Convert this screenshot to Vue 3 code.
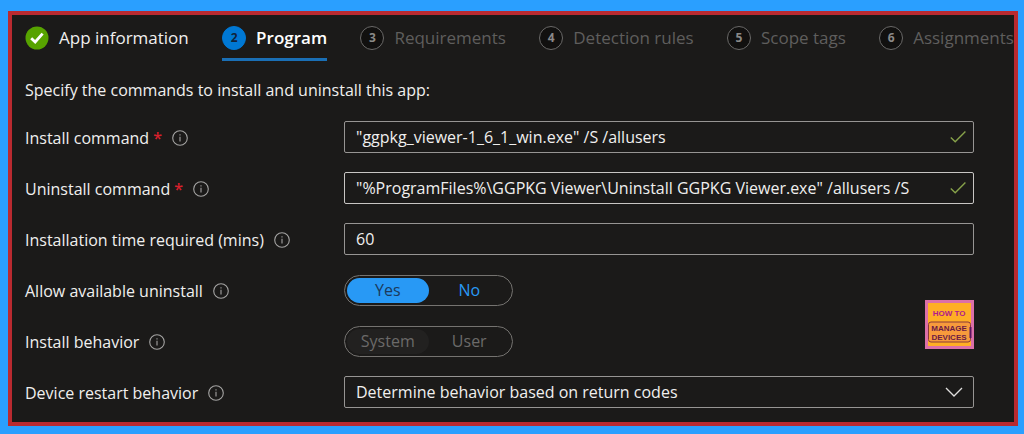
<script setup>
import { ref } from 'vue'

const steps = [
  { n: 1, title: 'App information', state: 'done' },
  { n: 2, title: 'Program', state: 'current' },
  { n: 3, title: 'Requirements', state: 'todo' },
  { n: 4, title: 'Detection rules', state: 'todo' },
  { n: 5, title: 'Scope tags', state: 'todo' },
  { n: 6, title: 'Assignments', state: 'todo' },
]

const fields = ref([
  { id: 'install', label: 'Install command', required: true, kind: 'text', valid: true, value: '"ggpkg_viewer-1_6_1_win.exe" /S /allusers' },
  { id: 'uninstall', label: 'Uninstall command', required: true, kind: 'text', valid: true, focused: true, value: '"%ProgramFiles%\\GGPKG Viewer\\Uninstall GGPKG Viewer.exe" /allusers /S' },
  { id: 'time', label: 'Installation time required (mins)', kind: 'text', value: '60' },
  { id: 'allow', label: 'Allow available uninstall', kind: 'toggle', options: ['Yes', 'No'], value: 'Yes' },
  { id: 'behavior', label: 'Install behavior', kind: 'toggle', disabled: true, options: ['System', 'User'], value: 'System' },
  { id: 'restart', label: 'Device restart behavior', kind: 'select', options: ['Determine behavior based on return codes'], value: 'Determine behavior based on return codes' },
])
</script>

<template>
  <div class="backdrop">
    <main class="panel">
      <nav class="steps" aria-label="Steps">
        <button v-for="s in steps" :key="s.n" type="button" class="step" :class="s.state">
          <svg v-if="s.state === 'done'" class="done-icon" viewBox="0 0 24 24" aria-hidden="true">
            <circle cx="12" cy="12" r="11.5" fill="#57a300" />
            <path d="M6.2 12.2 L10.2 16 L17.6 7.6" fill="none" stroke="#fff" stroke-width="2.8" />
          </svg>
          <span v-else class="badge">{{ s.n }}</span>
          <span class="title">{{ s.title }}</span>
        </button>
      </nav>

      <p class="intro">Specify the commands to install and uninstall this app:</p>

      <form class="form" @submit.prevent>
        <div v-for="f in fields" :key="f.id" class="row">
          <div class="caption">
            <label :id="f.id + '-label'" :for="f.kind === 'toggle' ? f.id + '-' + f.value : f.id">{{ f.label }}</label>
            <span v-if="f.required" class="required">*</span>
            <svg class="info" viewBox="0 0 16 16" aria-hidden="true">
              <circle cx="8" cy="8" r="7.3" />
              <path d="M8 6.8 V11.6 M8 4.2 V5.4" />
            </svg>
          </div>

          <div v-if="f.kind === 'text'" class="control">
            <input :id="f.id" v-model="f.value" type="text" class="box" :class="{ focused: f.focused }" spellcheck="false" />
            <svg v-if="f.valid" class="mark valid" viewBox="0 0 16 16" aria-hidden="true">
              <path d="M0.8 8.6 L5.2 12.8 L15.4 2.6" />
            </svg>
          </div>

          <div v-else-if="f.kind === 'toggle'" class="toggle" :class="{ off: f.disabled }" role="radiogroup" :aria-labelledby="f.id + '-label'">
            <label v-for="o in f.options" :key="o" class="option">
              <input :id="f.id + '-' + o" v-model="f.value" type="radio" :name="f.id" :value="o" :disabled="f.disabled" />
              <span>{{ o }}</span>
            </label>
          </div>

          <div v-else class="control">
            <select :id="f.id" v-model="f.value" class="box">
              <option v-for="o in f.options" :key="o">{{ o }}</option>
            </select>
            <svg class="mark chevron" viewBox="0 0 18 18" aria-hidden="true">
              <path d="M1 5 L9 13 L17 5" />
            </svg>
          </div>
        </div>
      </form>

      <svg class="logo" viewBox="0 0 49 49" role="img" aria-label="How to manage devices">
        <rect width="49" height="49" fill="#dc6fa8" />
        <rect x="3" y="3" width="43" height="43" fill="#ffae25" />
        <rect x="3.5" y="22" width="42" height="20" rx="2.5" fill="#f79a3c" stroke="#8a3a38" stroke-width="1" />
        <rect x="44.5" y="27" width="2" height="11" fill="#5a1560" />
        <text x="24" y="16" class="logo-text logo-top">HOW TO</text>
        <text x="24" y="31" class="logo-text logo-low">MANAGE</text>
        <text x="24" y="40" class="logo-text logo-low">DEVICES</text>
      </svg>
    </main>
  </div>
</template>

<style>
body {
  background: #2a9fff;
}
</style>

<style scoped>
.backdrop {
  box-sizing: border-box;
  padding: 11px 6px 8px 8px;
  background: #2a9fff;
  color: #f0efee;
  font: 16px/24px "Open Sans", "Noto Sans", sans-serif;
}

.panel {
  position: relative;
  box-sizing: border-box;
  padding: 10px 0 14px 13px;
  background: #1b1a19;
  border: 4px solid #b92a30;
}

.steps {
  display: flex;
  justify-content: space-between;
}

.step {
  display: flex;
  align-items: center;
  gap: 10px;
  height: 36px;
  padding: 0 0 8px;
  background: none;
  border: 0;
  border-bottom: 3px solid transparent;
  color: #5f5e5d;
  font: 17px/24px "Open Sans", "Noto Sans", sans-serif;
  white-space: nowrap;
}

.done {
  color: #f0efee;
}

.current {
  border-bottom-color: #1a6fb5;
  color: #fff;
  font-weight: 600;
}

.done-icon {
  width: 24px;
  height: 24px;
}

.badge {
  box-sizing: border-box;
  width: 24px;
  height: 24px;
  border: 1px solid #6a6968;
  border-radius: 50%;
  background: #11100f;
  color: #8a8988;
  font-size: 12px;
  line-height: 22px;
  font-weight: 700;
  text-align: center;
}

.current .badge {
  border-color: #0078d4;
  background: #0078d4;
  color: #11223a;
}

.intro {
  margin: 17px 0 19px;
}

.form {
  display: grid;
  gap: 19px;
  padding-right: 40px;
}

.row {
  display: grid;
  grid-template-columns: 319px 1fr;
  align-items: center;
  height: 32px;
}

.caption {
  display: flex;
  align-items: center;
  padding-top: 2px;
}

.required {
  margin-left: 4px;
  color: #d8202c;
  font-weight: 600;
}

.info {
  width: 16px;
  height: 16px;
  margin-left: 10px;
  fill: none;
  stroke: #a5a4a3;
  stroke-width: 1.1;
}

.control {
  position: relative;
}

.box {
  display: block;
  box-sizing: border-box;
  width: 100%;
  height: 32px;
  padding: 0 40px 0 11px;
  appearance: none;
  background: #1b1a19;
  border: 1px solid #979593;
  border-radius: 2px;
  outline: none;
  color: #f0efee;
  font: inherit;
}

.focused {
  border-color: #c8c6c4;
}

.mark {
  position: absolute;
  right: 8px;
  top: 8px;
  width: 16px;
  height: 16px;
  fill: none;
}

.valid {
  stroke: #87a24a;
  stroke-width: 1.4;
}

.chevron {
  right: 11px;
  top: 7px;
  width: 18px;
  height: 18px;
  stroke: #e0dfde;
  stroke-width: 1.3;
}

.toggle {
  display: grid;
  grid-template-columns: 1fr 1fr;
  box-sizing: border-box;
  width: 169px;
  height: 31px;
  padding: 2px;
  border: 1px solid #757370;
  border-radius: 16px;
}

.option {
  display: grid;
}

.option input {
  grid-area: 1 / 1;
  margin: 0;
  appearance: none;
}

.option span {
  grid-area: 1 / 1;
  border-radius: 13px;
  color: #2899f5;
  line-height: 25px;
  text-align: center;
}

.option input:checked + span {
  background: #2899f5;
  color: #1b3a5c;
}

.off .option span {
  color: #6b6a69;
}

.off .option input:checked + span {
  background: #222120;
  color: #6b6a69;
}

.logo {
  position: absolute;
  right: 40px;
  bottom: 73px;
  width: 49px;
  height: 49px;
}

.logo-text {
  font-family: "Liberation Sans", sans-serif;
  font-size: 8px;
  font-weight: 700;
  text-anchor: middle;
}

.logo-top {
  fill: #b01a8c;
}

.logo-low {
  fill: #6b1a45;
}
</style>
